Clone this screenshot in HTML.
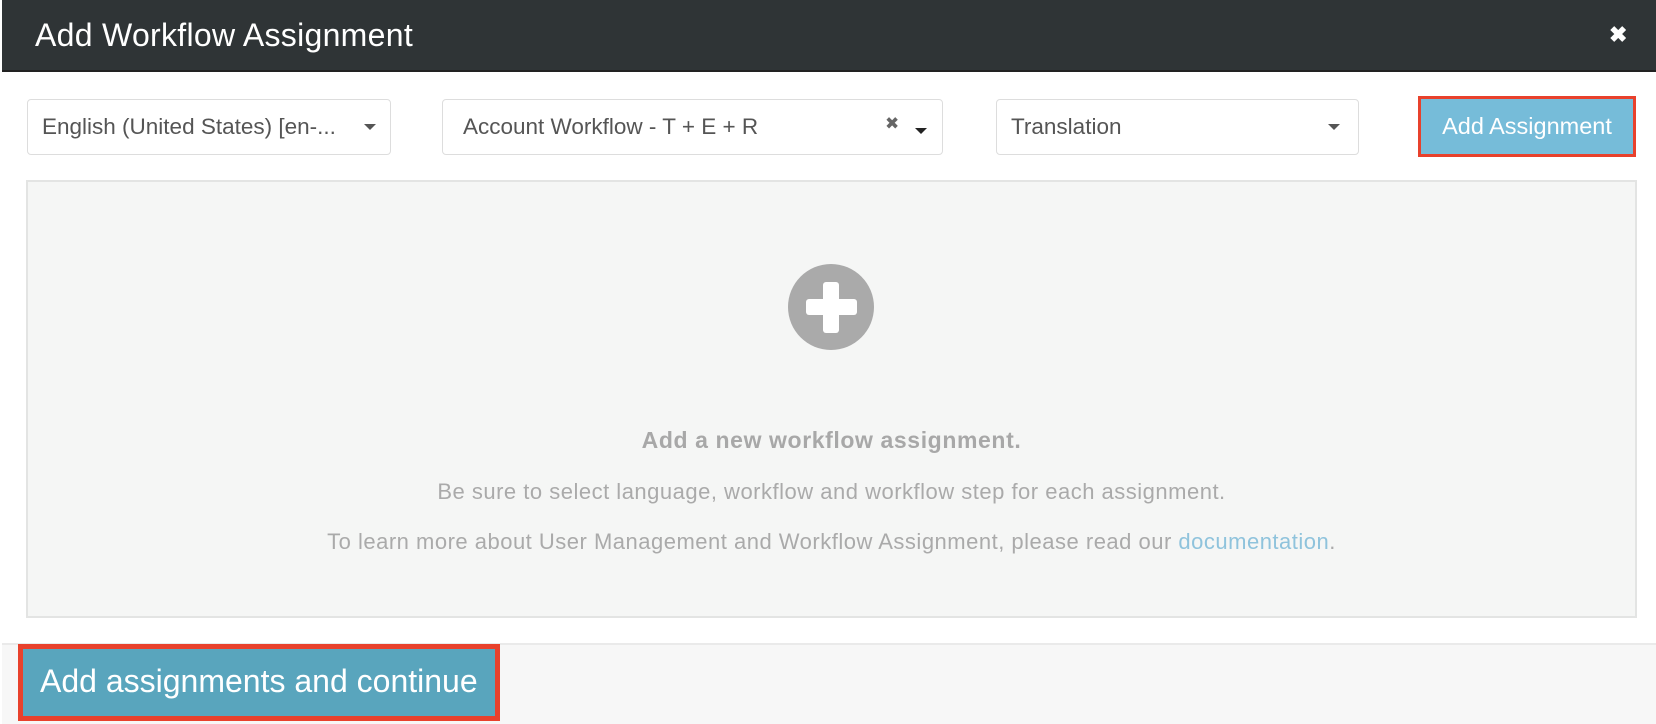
<!DOCTYPE html>
<html><head><meta charset="utf-8"><style>
*{box-sizing:border-box;margin:0;padding:0}
body{width:1656px;height:724px;background:#fff;font-family:"Liberation Sans",sans-serif;position:relative;overflow:hidden}
.hdr{position:absolute;left:2px;top:0;width:1654px;height:72px;background:#2f3436;border-bottom:2px solid #222}
.hdr h1{position:absolute;left:33px;top:17px;font-size:32px;font-weight:normal;color:#fff;letter-spacing:0.3px}
.close{position:absolute;left:1607px;top:22px;color:#fff;font-size:22px;font-weight:bold}
.sel{position:absolute;top:99px;height:56px;border:1px solid #ddd;border-radius:4px;background:#fff;color:#555;font-size:22.5px;line-height:54px;padding-left:14px;white-space:nowrap}
.car{position:absolute;top:24px;width:0;height:0;border-left:6px solid transparent;border-right:6px solid transparent;border-top:6px solid #555}
.btn1{position:absolute;left:1418px;top:96px;width:218px;height:61px;border:3px solid #e8412c;background:#76bcd9;color:#fff;font-size:23.5px;text-align:center;line-height:54px;white-space:nowrap}
.panel{position:absolute;left:26px;top:180px;width:1611px;height:438px;background:#f5f6f5;border:2px solid #e3e4e3}
.circ{position:absolute;left:788px;top:264px;width:86px;height:86px;border-radius:50%;background:#aaa}
.ph{position:absolute;background:#fff;border-radius:3px}
.t{position:absolute;left:26px;width:1611px;text-align:center;color:#aaa;font-size:22px;letter-spacing:0.5px;white-space:nowrap}
.foot{position:absolute;left:2px;top:643px;width:1654px;height:81px;background:#f7f7f7;border-top:2px solid #eaeaea}
.btn2{position:absolute;left:18px;top:644px;width:482px;height:77px;border:5px solid #e8412c;background:#59a5bd;color:#fff;font-size:32px;line-height:64px;padding-left:17px;white-space:nowrap}
</style></head><body>
<div class="hdr"><h1>Add Workflow Assignment</h1><div class="close">✖</div></div>
<div class="sel" style="left:27px;width:364px">English (United States) [en-...<span class="car" style="left:336px"></span></div>
<div class="sel" style="left:442px;width:501px;padding-left:20px">Account Workflow - T + E + R<span style="position:absolute;left:442px;top:-3px;font-size:17px;color:#666">✖</span><span class="car" style="left:472px;top:28px;border-top-color:#222"></span></div>
<div class="sel" style="left:996px;width:363px">Translation<span class="car" style="left:331px"></span></div>
<div class="btn1">Add Assignment</div>
<div class="panel"></div>
<div class="circ"><div class="ph" style="left:35px;top:18px;width:16px;height:51px"></div><div class="ph" style="left:18px;top:35px;width:51px;height:16px"></div></div>
<div class="t" style="top:427px;font-weight:bold;font-size:23px;letter-spacing:0.6px;color:#a8a8a8">Add a new workflow assignment.</div>
<div class="t" style="top:479px">Be sure to select language, workflow and workflow step for each assignment.</div>
<div class="t" style="top:529px">To learn more about User Management and Workflow Assignment, please read our <span style="color:#8fc3dc">documentation</span>.</div>
<div class="foot"></div>
<div class="btn2">Add assignments and continue</div>
</body></html>
